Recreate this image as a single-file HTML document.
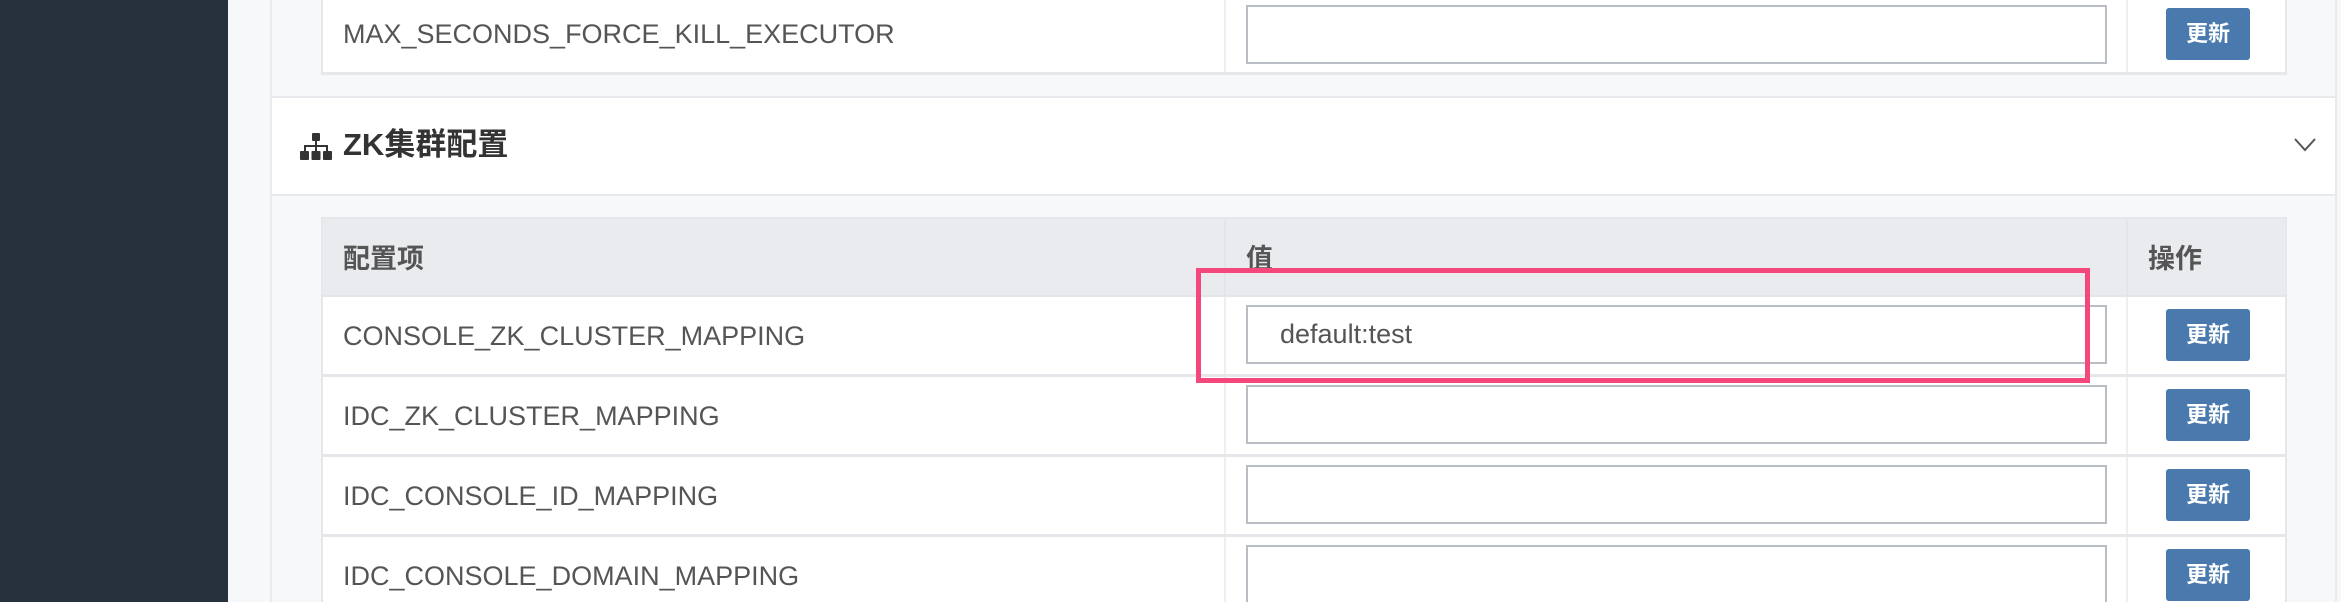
<!DOCTYPE html>
<html style="width:2341px;height:602px;overflow:hidden"><head><meta charset="utf-8"><style>
*{margin:0;padding:0;box-sizing:border-box}
body{width:2341px;height:602px;overflow:hidden;background:#f7f8fa;position:relative;font-family:"Liberation Sans","Noto Sans CJK SC",sans-serif;color:#555}
.abs{position:absolute}
.side{left:0;top:0;width:228px;height:602px;background:#27313d}
.panel{left:270px;width:2067px;background:#fff;border:2px solid #e8eaed}
.row{position:absolute;left:321px;width:1966px;height:80px;background:#fff;border-bottom:3px solid #e5e7ea;border-left:2px solid #e5e7ea;border-right:2px solid #e5e7ea}
.row .c1{position:absolute;left:20px;top:0;line-height:78px;font-size:27px;color:#555;white-space:nowrap}
.row .d1{position:absolute;left:901px;top:0;bottom:0;border-left:2px solid #eceef0}
.row .d2{position:absolute;left:1803px;top:0;bottom:0;border-left:2px solid #eceef0}
.inp{position:absolute;left:923px;top:8px;width:861px;height:59px;border:2px solid #b9bec4;background:#fff;font-size:27px;line-height:55px;padding-left:32px;color:#555}
.btn{position:absolute;left:1843px;top:12px;width:84px;height:52px;background:#4a7aad;border-radius:3px;color:#fff;font-weight:bold;font-size:22px;text-align:center;line-height:52px}
</style></head><body>
<div class="abs side"></div>
<div class="abs panel" style="top:-5px;height:103px;background:#f7f8fa"></div>
<div class="abs panel" style="top:96px;height:100px"></div>
<div class="abs panel" style="top:194px;height:408px;background:#f7f8fa;border-bottom:none"></div>

<div class="row" style="top:-5px;height:80px"><div class="c1" style="line-height:78px">MAX_SECONDS_FORCE_KILL_EXECUTOR</div><div class="d1"></div><div class="d2"></div><div class="inp" style="top:10px;height:59px"></div><div class="btn" style="top:13px">更新</div></div>

<svg class="abs" style="left:300px;top:133px" width="32" height="27" viewBox="0 0 32 27"><g fill="#333"><rect x="12" y="0" width="8" height="8" rx="1"/><rect x="15" y="8" width="2" height="6"/><rect x="4" y="12" width="24" height="2"/><rect x="4" y="12" width="2" height="6"/><rect x="26" y="12" width="2" height="6"/><rect x="15" y="12" width="2" height="6"/><rect x="0" y="18" width="9" height="9" rx="1"/><rect x="11.5" y="18" width="9" height="9" rx="1"/><rect x="23" y="18" width="9" height="9" rx="1"/></g></svg>
<div class="abs" style="left:343px;top:126px;font-size:31px;font-weight:bold;color:#333;line-height:38px">ZK集群配置</div>
<svg class="abs" style="left:2294px;top:138px" width="22" height="14" viewBox="0 0 22 14"><path d="M1 1 L11 12 L21 1" fill="none" stroke="#555" stroke-width="2"/></svg>

<div class="row" style="top:217px;height:80px;background:#e9ebef;border-top:2px solid #e5e7ea;border-bottom:2px solid #e3e5e8"><div class="c1" style="font-weight:bold;line-height:80px;color:#555">配置项</div><div class="d1" style="border-color:#e3e5e8"></div><div class="d2" style="border-color:#e3e5e8"></div><div class="c1" style="left:923px;font-weight:bold;line-height:80px">值</div><div class="c1" style="left:1825px;font-weight:bold;line-height:80px">操作</div></div>

<div class="row" style="top:297px"><div class="c1">CONSOLE_ZK_CLUSTER_MAPPING</div><div class="d1"></div><div class="d2"></div><div class="inp">default:test</div><div class="btn">更新</div></div>
<div class="row" style="top:377px"><div class="c1">IDC_ZK_CLUSTER_MAPPING</div><div class="d1"></div><div class="d2"></div><div class="inp"></div><div class="btn">更新</div></div>
<div class="row" style="top:457px"><div class="c1">IDC_CONSOLE_ID_MAPPING</div><div class="d1"></div><div class="d2"></div><div class="inp"></div><div class="btn">更新</div></div>
<div class="row" style="top:537px;height:65px;border-bottom:none"><div class="c1">IDC_CONSOLE_DOMAIN_MAPPING</div><div class="d1"></div><div class="d2"></div><div class="inp" style="height:70px"></div><div class="btn">更新</div></div>

<div class="abs" style="left:1196px;top:268px;width:894px;height:115px;border:5px solid #f4477c"></div>
</body></html>
